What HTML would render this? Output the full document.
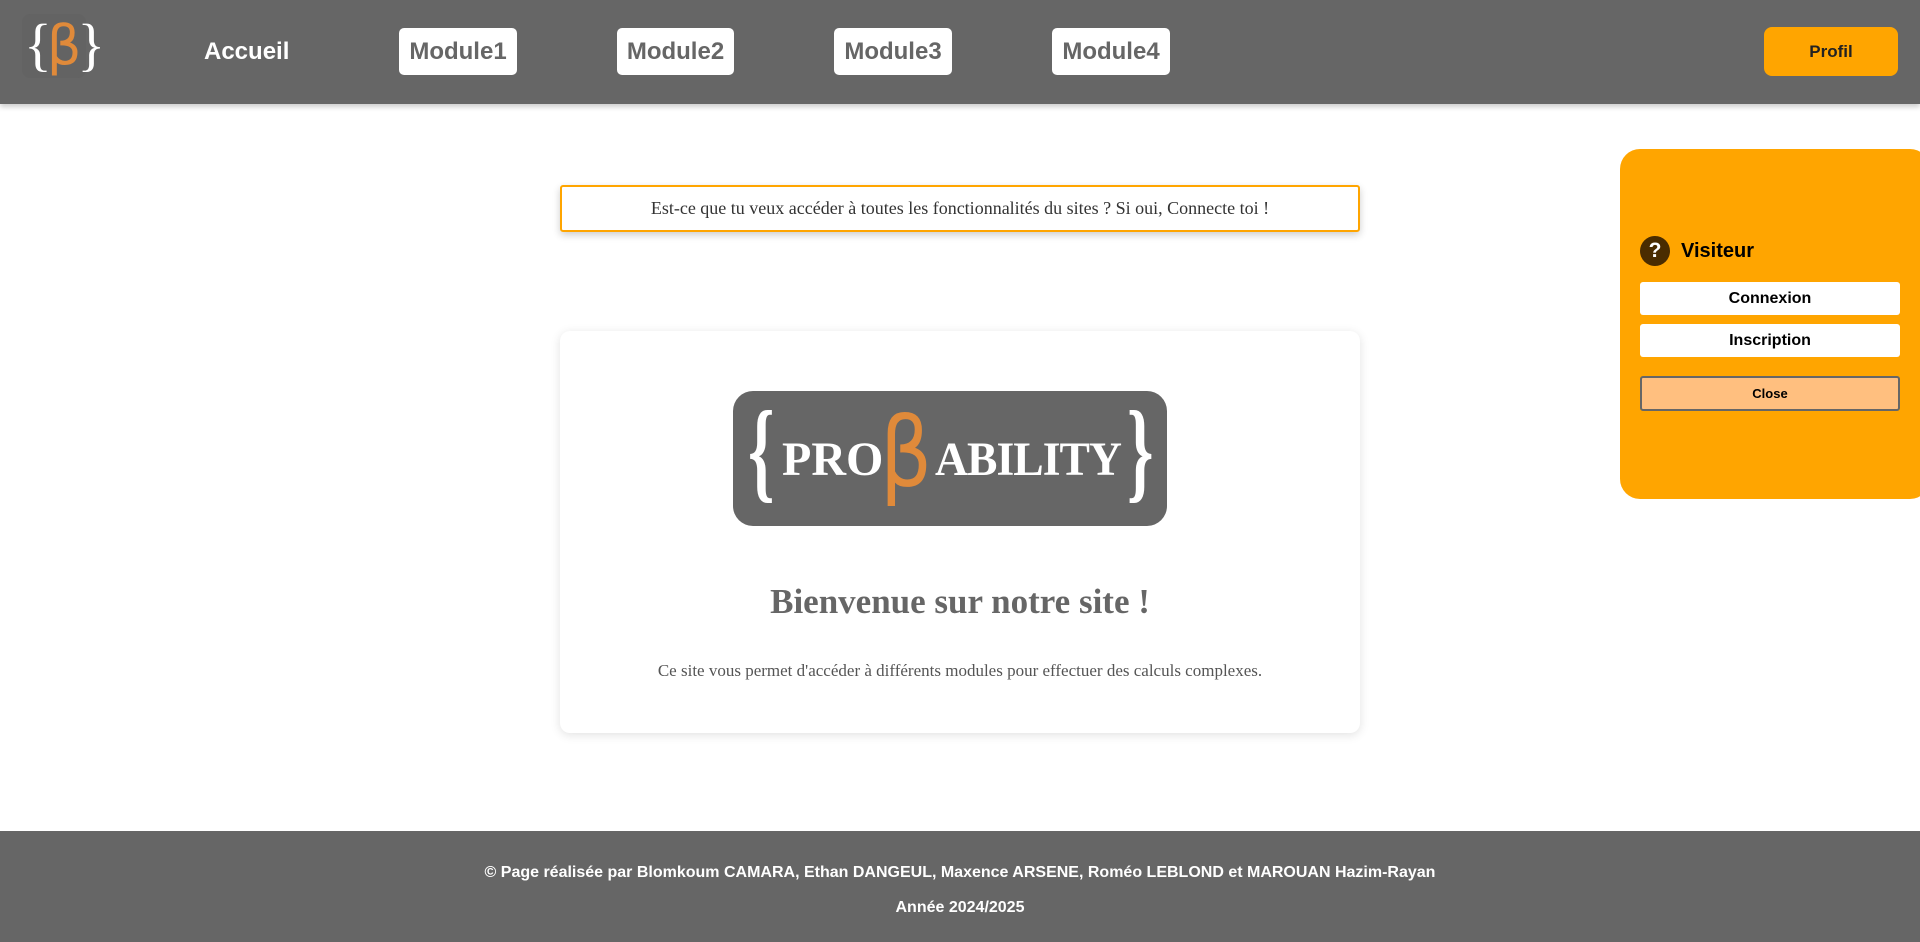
<!DOCTYPE html>
<html><head><meta charset="utf-8"><style>
*{margin:0;padding:0;box-sizing:border-box}
body{width:1920px;height:942px;background:#fff;position:relative;overflow:hidden;font-family:"Liberation Sans",Arial,sans-serif}
header{position:absolute;left:0;top:0;width:1920px;height:104px;background:#666;box-shadow:0 3px 5px rgba(0,0,0,.2)}
.abs{position:absolute}
.nav{position:absolute;top:28px;height:47px;background:#fff;border-radius:5px;color:#666;font-weight:bold;font-size:24px;display:flex;align-items:center;justify-content:center}
.serif{font-family:"Liberation Serif",Georgia,serif}
.pbtn{position:absolute;left:1640px;width:260px;height:33px;background:#fff;border-radius:3px;font-weight:bold;font-size:16px;display:flex;align-items:center;justify-content:center;color:#000}
footer{position:absolute;left:0;top:831px;width:1920px;height:111px;background:#666;color:#fff;font-weight:bold;font-size:16px;text-align:center}
</style></head><body>
<header>
 <div class="abs" style="left:22px;top:14px;width:64px;height:64px;border-radius:8px;background:#636363"></div>
 <div class="abs serif" style="left:24px;top:10px;font-size:58px;color:#fff;font-weight:normal;line-height:70px;letter-spacing:-5px">{<span style="color:#e08a3a;font-family:'DejaVu Sans',sans-serif;font-size:54px;letter-spacing:-4px">β</span>}</div>
 <div class="abs" style="left:204px;top:38px;font-size:24px;font-weight:bold;color:#fff">Accueil</div>
 <div class="nav" style="left:399px;width:118px">Module1</div>
 <div class="nav" style="left:617px;width:117px">Module2</div>
 <div class="nav" style="left:834px;width:118px">Module3</div>
 <div class="nav" style="left:1052px;width:118px">Module4</div>
 <div class="abs" style="left:1764px;top:27px;width:134px;height:49px;background:#ffa500;border-radius:8px;color:#222;font-weight:bold;font-size:17px;display:flex;align-items:center;justify-content:center">Profil</div>
</header>

<div class="abs serif" style="left:560px;top:185px;width:800px;height:47px;border:2px solid #ffa500;border-radius:3px;box-shadow:0 3px 8px rgba(0,0,0,.2);display:flex;align-items:center;justify-content:center;font-size:18px;color:#333">Est-ce que tu veux accéder à toutes les fonctionnalités du sites ? Si oui, Connecte toi !</div>

<div class="abs" style="left:560px;top:331px;width:800px;height:402px;border-radius:10px;box-shadow:0 2px 10px rgba(0,0,0,.12);background:#fff"></div>
<div class="abs" style="left:733px;top:391px;width:434px;height:135px;background:#666;border-radius:20px"></div>
<div class="abs serif" style="left:748px;top:386px;font-size:112px;color:#fff;line-height:130px;transform:scaleX(.6);transform-origin:left;font-weight:bold">{</div>
<div class="abs serif" style="left:1127px;top:386px;font-size:112px;color:#fff;line-height:130px;transform:scaleX(.6);transform-origin:left;font-weight:bold">}</div>
<div class="abs serif" style="left:782px;top:430px;font-size:48px;font-weight:bold;color:#fff;line-height:60px">PRO</div>
<div class="abs" style="left:880px;top:398px;font-size:96px;color:#e08a3a;line-height:110px;font-family:'DejaVu Sans',sans-serif;transform:scaleX(.85);transform-origin:left">β</div>
<div class="abs serif" style="left:935px;top:430px;font-size:48px;font-weight:bold;color:#fff;line-height:60px;letter-spacing:-1px;transform:scaleX(.95);transform-origin:left">ABILITY</div>

<div class="abs serif" style="left:560px;top:582px;width:800px;text-align:center;font-size:35px;font-weight:bold;color:#666">Bienvenue sur notre site !</div>
<div class="abs serif" style="left:560px;top:661px;width:800px;text-align:center;font-size:17px;color:#555">Ce site vous permet d'accéder à différents modules pour effectuer des calculs complexes.</div>

<div class="abs" style="left:1620px;top:149px;width:310px;height:350px;background:#ffa500;border-radius:20px"></div>
<div class="abs" style="left:1640px;top:236px;width:30px;height:30px;border-radius:50%;background:#4a2c00;color:#fff;font-weight:bold;font-size:21px;display:flex;align-items:center;justify-content:center">?</div>
<div class="abs" style="left:1681px;top:240px;font-size:20px;font-weight:bold;color:#000">Visiteur</div>
<div class="pbtn" style="top:282px">Connexion</div>
<div class="pbtn" style="top:324px">Inscription</div>
<div class="pbtn" style="top:376px;height:35px;background:#ffbf7f;border:2px solid #666;font-size:13px">Close</div>

<footer>
 <div style="position:absolute;left:0;right:0;top:33px">© Page réalisée par Blomkoum CAMARA, Ethan DANGEUL, Maxence ARSENE, Roméo LEBLOND et MAROUAN Hazim-Rayan</div>
 <div style="position:absolute;left:0;right:0;top:68px">Année 2024/2025</div>
</footer>
</body></html>
